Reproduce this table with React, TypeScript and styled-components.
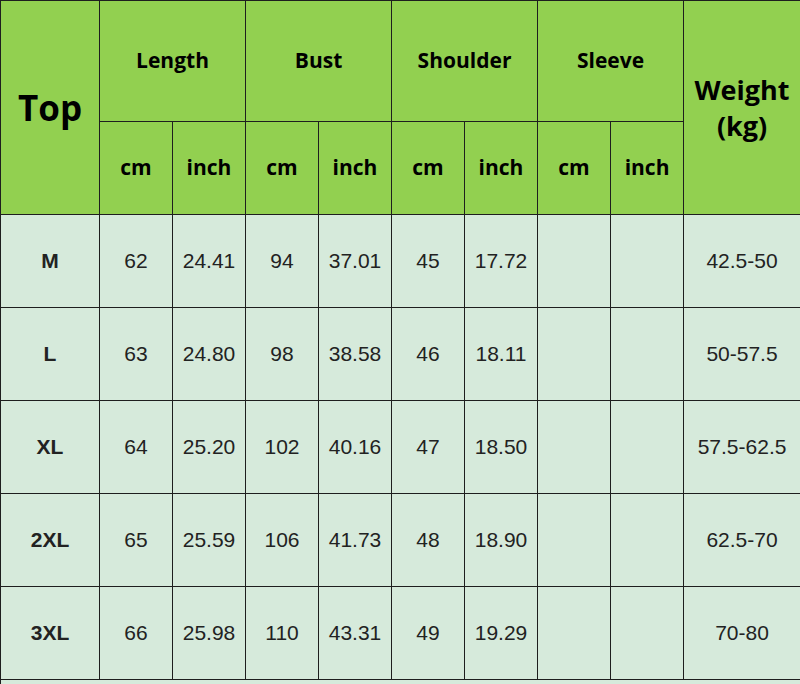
import React from "react";
import styled, { createGlobalStyle } from "styled-components";

const GlobalStyle = createGlobalStyle`
  html, body {
    margin: 0;
    padding: 0;
    background: #d6eadb;
    overflow: hidden;
  }
`;

const Table = styled.table`
  border-collapse: collapse;
  table-layout: fixed;
  width: 800px;
`;

const HeadCell = styled.th<{ $size?: number; $leading?: number }>`
  background: #92d050;
  border: 1px solid #1e1e1e;
  color: #000;
  font-family: "Open Sans", "Noto Sans", sans-serif;
  font-weight: 700;
  font-size: ${(p) => p.$size ?? 21}px;
  line-height: ${(p) => p.$leading ?? 1.2};
  text-align: center;
  vertical-align: middle;
  padding: 0;
`;

const Cell = styled.td<{ $bold?: boolean }>`
  background: #d6eadb;
  border: 1px solid #1e1e1e;
  color: #222;
  font-family: "Liberation Sans", Arial, sans-serif;
  font-weight: ${(p) => (p.$bold ? 700 : 400)};
  font-size: 21px;
  text-align: center;
  vertical-align: middle;
  padding: 0;
  height: 92px;
`;

const TopRow = styled.tr`
  height: 121px;
`;

const UnitRow = styled.tr`
  height: 93px;
`;

const columns = [99, 73, 73, 73, 73, 73, 73, 73, 73, 117];

const rows = [
  ["M", "62", "24.41", "94", "37.01", "45", "17.72", "", "", "42.5-50"],
  ["L", "63", "24.80", "98", "38.58", "46", "18.11", "", "", "50-57.5"],
  ["XL", "64", "25.20", "102", "40.16", "47", "18.50", "", "", "57.5-62.5"],
  ["2XL", "65", "25.59", "106", "41.73", "48", "18.90", "", "", "62.5-70"],
  ["3XL", "66", "25.98", "110", "43.31", "49", "19.29", "", "", "70-80"],
];

const groups = ["Length", "Bust", "Shoulder", "Sleeve"];

export default function App() {
  return (
    <>
      <GlobalStyle />
      <Table>
        <colgroup>
          {columns.map((w, i) => (
            <col key={i} style={{ width: w }} />
          ))}
        </colgroup>
        <thead>
          <TopRow>
            <HeadCell rowSpan={2} $size={35}>
              Top
            </HeadCell>
            {groups.map((g) => (
              <HeadCell key={g} colSpan={2}>
                {g}
              </HeadCell>
            ))}
            <HeadCell rowSpan={2} $size={27} $leading={1.3}>
              Weight
              <br />
              (kg)
            </HeadCell>
          </TopRow>
          <UnitRow>
            {groups.map((g) => (
              <React.Fragment key={g}>
                <HeadCell>cm</HeadCell>
                <HeadCell>inch</HeadCell>
              </React.Fragment>
            ))}
          </UnitRow>
        </thead>
        <tbody>
          {rows.map((r) => (
            <tr key={r[0]}>
              {r.map((v, i) => (
                <Cell key={i} $bold={i === 0}>
                  {v}
                </Cell>
              ))}
            </tr>
          ))}
          <tr>
            <Cell colSpan={10} />
          </tr>
        </tbody>
      </Table>
    </>
  );
}
